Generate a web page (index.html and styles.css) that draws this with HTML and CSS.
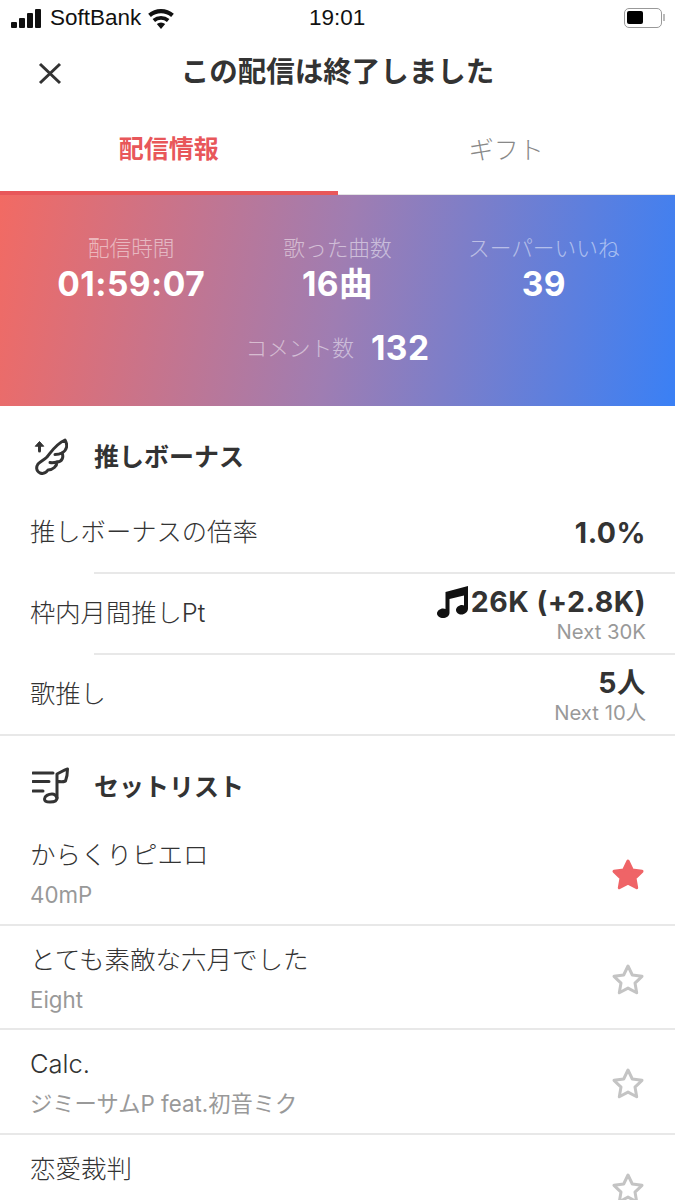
FILE: index.html
```html
<!DOCTYPE html>
<html lang="ja">
<head>
  <meta charset="UTF-8">
  <title>この配信は終了しました</title>
  <link rel="stylesheet" href="styles.css">
</head>
<body>
  <div class="container">
    <div class="status-bar">
      <div class="status-left">
        <svg class="signal" width="31" height="19" viewBox="0 0 31 19"><rect x="0" y="13" width="6" height="6" rx="1"/><rect x="8" y="9" width="6" height="10" rx="1"/><rect x="16" y="4" width="6" height="15" rx="1"/><rect x="24" y="0" width="6" height="19" rx="1"/></svg>
        <span class="carrier">SoftBank</span>
        <svg class="wifi" width="28" height="21" viewBox="0 0 24 18"><path d="M12 18l-3.600-4.200a5.400 5.400 0 0 1 7.200 0zM6.900 12l-2.100-2.500a11.200 11.200 0 0 1 14.400 0L17.100 12a8 8 0 0 0-10.200 0zM3.300 7.700L1 5a17 17 0 0 1 22 0l-2.300 2.700a13.600 13.600 0 0 0-17.400 0z"/></svg>
      </div>
      <div class="status-time">19:01</div>
      <div class="battery"><span class="battery-level"></span></div>
    </div>

    <header class="nav">
      <svg class="close" width="24" height="24" viewBox="0 0 24 24"><path d="M2 3l20 19M22 3L2 22"/></svg>
      <h1>この配信は終了しました</h1>
    </header>

    <div class="tabs">
      <div class="tab active">配信情報</div>
      <div class="tab">ギフト</div>
    </div>

    <section class="stats">
      <div class="stats-top">
        <div class="stat"><span class="stat-label">配信時間</span><strong>01:59:07</strong></div>
        <div class="stat"><span class="stat-label">歌った曲数</span><strong>16曲</strong></div>
        <div class="stat"><span class="stat-label">スーパーいいね</span><strong>39</strong></div>
      </div>
      <div class="stats-comment"><span class="stat-label">コメント数</span><strong>132</strong></div>
    </section>

    <section class="bonus">
      <div class="section-head">
        <svg class="section-icon" width="36" height="38" viewBox="0 0 36 38">
          <path d="M33 3C36 8 35 13 30 16 32 20 30 25 25 25 25 29 21 33 16 33 14 36 11 37 8 36 4 34 4 30 6 27 9 24 12 23 15 20 20 14 24 7 33 3z"/>
          <path d="M30 16c-2 1-4 1.500-7 1.500M25 25c-2 .5-4 1-7 .5"/>
          <path class="arrow" d="M3.500 9L7.500 4.500 11.500 9z"/>
          <path d="M7.500 8v6"/>
        </svg>
        <h2>推しボーナス</h2>
      </div>
      <div class="row">
        <span class="row-label">推しボーナスの倍率</span>
        <div class="row-value"><b>1.0%</b></div>
      </div>
      <div class="row">
        <span class="row-label">枠内月間推しPt</span>
        <div class="row-value">
          <b class="with-note"><svg class="note" width="33" height="32" viewBox="0 0 33 32"><path d="M9.500 6L32 0v22.500c0 3.500-3.500 6-6.500 6S20 26.500 20 24s3-5 6-5c1 0 1.500.2 2 .5V9.500L13.500 13v14c0 3-3.500 5-6.500 5S1 30 1 27.500 4 22.500 7 22.500c1 0 2 .2 2.500.5z"/></svg>26K (+2.8K)</b>
          <small>Next 30K</small>
        </div>
      </div>
      <div class="row">
        <span class="row-label">歌推し</span>
        <div class="row-value"><b>5人</b><small>Next 10人</small></div>
      </div>
    </section>

    <section class="setlist">
      <div class="section-head">
        <svg class="section-icon" width="37" height="38" viewBox="0 0 37 38">
          <path d="M1 7h20M1 15.500h16M1 25h10"/>
          <path d="M25 32V8C29 6 32 4 35.500 3 35.500 7 35 11 33.500 15 31 16 28 16 25 15"/>
          <path d="M25 32c0 2.500-3 4-7 4-3 0-5.500-1-5.500-3 0-3 4-5 7.500-5 2 0 4 1 5 4z"/>
        </svg>
        <h2>セットリスト</h2>
      </div>
      <div class="song">
        <div class="song-text"><p>からくりピエロ</p><small>40mP</small></div>
        <svg class="star on" width="34" height="34" viewBox="0 0 34 34"><path d="M17 3l4.300 9 9.700 1.300-7 6.800 1.700 9.700-8.700-4.700-8.700 4.700 1.700-9.700-7-6.800 9.700-1.300z"/></svg>
      </div>
      <div class="song">
        <div class="song-text"><p>とても素敵な六月でした</p><small>Eight</small></div>
        <svg class="star" width="34" height="34" viewBox="0 0 34 34"><path d="M17 3l4.300 9 9.700 1.300-7 6.800 1.700 9.700-8.700-4.700-8.700 4.700 1.700-9.700-7-6.800 9.700-1.300z"/></svg>
      </div>
      <div class="song">
        <div class="song-text"><p>Calc.</p><small>ジミーサムP feat.初音ミク</small></div>
        <svg class="star" width="34" height="34" viewBox="0 0 34 34"><path d="M17 3l4.300 9 9.700 1.300-7 6.800 1.700 9.700-8.700-4.700-8.700 4.700 1.700-9.700-7-6.800 9.700-1.300z"/></svg>
      </div>
      <div class="song">
        <div class="song-text"><p>恋愛裁判</p><small>40mP</small></div>
        <svg class="star" width="34" height="34" viewBox="0 0 34 34"><path d="M17 3l4.300 9 9.700 1.300-7 6.800 1.700 9.700-8.700-4.700-8.700 4.700 1.700-9.700-7-6.800 9.700-1.300z"/></svg>
      </div>
    </section>
  </div>
</body>
</html>
```

FILE: styles.css
```css
* {
  margin: 0;
  padding: 0;
  box-sizing: border-box;
}

html, body {
  height: 1200px;
  overflow: hidden;
}

body {
  font-family: Inter, "Noto Sans CJK JP", sans-serif;
  background-color: #fff;
  color: #333;
}

.container {
  width: 675px;
  height: 1200px;
  overflow: hidden;
}

/* status bar */
.status-bar {
  height: 36px;
  padding: 0 10px 0 11px;
  display: flex;
  align-items: center;
  justify-content: space-between;
  position: relative;
  color: #111;
}

.status-left {
  display: flex;
  align-items: center;
  gap: 8px;
}

.signal, .wifi {
  fill: #111;
}

.wifi {
  margin-left: -2px;
}

.carrier {
  font-family: "Liberation Sans", sans-serif;
  font-size: 22.500px;
}

.status-time {
  font-family: "Liberation Sans", sans-serif;
  font-size: 22.500px;
  position: absolute;
  left: 309px;
  top: 5px;
}

.battery {
  width: 38px;
  height: 20px;
  border: 1.500px solid #999;
  border-radius: 5px;
  padding: 2px;
  margin-right: 3px;
  position: relative;
}

.battery::after {
  content: "";
  position: absolute;
  right: -4px;
  top: 5px;
  width: 2px;
  height: 7px;
  background-color: #bbb;
}

.battery-level {
  display: block;
  width: 16px;
  height: 13px;
  background-color: #000;
  border-radius: 2px;
}

/* nav */
.nav {
  height: 72px;
  position: relative;
  display: flex;
  align-items: center;
  justify-content: center;
}

.close {
  position: absolute;
  left: 38px;
  top: 25px;
  fill: none;
  stroke: #333;
  stroke-width: 3;
}

.nav h1 {
  font-size: 28.500px;
  font-weight: 700;
  color: #333;
  line-height: 1;
}

/* tabs */
.tabs {
  height: 87px;
  display: flex;
}

.tab {
  flex: 1;
  display: flex;
  align-items: center;
  justify-content: center;
  font-size: 25px;
  color: #888;
  font-weight: 300;
  padding-bottom: 6px;
  border-bottom: 1px solid #e4e4e4;
}

.tab.active {
  color: #e8575a;
  font-weight: 700;
  border-bottom: 4px solid #e8575a;
}

/* gradient block */
.stats {
  height: 211px;
  background: linear-gradient(100deg, #f26a63 0%, #9f7db2 50%, #3a80f5 100%);
  color: #fff;
  padding-top: 39px;
}

.stats-top {
  display: flex;
  padding: 0 28px;
}

.stat {
  flex: 1;
  display: flex;
  flex-direction: column;
  align-items: center;
}

.stat-label {
  font-size: 21.700px;
  line-height: 28px;
  color: rgba(255, 255, 255, 0.5);
  font-weight: 300;
}

.stat strong, .stats-comment strong {
  font-size: 33.500px;
  line-height: 44px;
  font-weight: 700;
  letter-spacing: 0.5px;
}

.stats-comment {
  margin-top: 20px;
  display: flex;
  justify-content: center;
  align-items: center;
  gap: 17px;
}

/* sections */
.section-head {
  height: 85px;
  padding: 12px 30px 0 32px;
  display: flex;
  align-items: center;
}

.section-icon {
  fill: none;
  stroke: #333;
  stroke-width: 3;
  stroke-linecap: round;
  stroke-linejoin: round;
  margin-right: 26px;
  flex: none;
}

.section-icon .arrow {
  fill: #333;
  stroke-width: 1;
}

.bonus .section-icon {
  margin-top: 3px;
}

.setlist .section-icon {
  margin-right: 25px;
}

.section-head h2 {
  font-size: 25px;
  font-weight: 700;
  color: #333;
}

.bonus {
  border-bottom: 2px solid #e8e8e8;
}

.row {
  height: 81px;
  padding: 0 29px 0 30px;
  display: flex;
  align-items: center;
  justify-content: space-between;
  position: relative;
}

.row + .row::before {
  content: "";
  position: absolute;
  left: 94px;
  right: 0;
  top: 0;
  height: 2px;
  background-color: #e8e8e8;
}

.row-label {
  font-size: 25.300px;
  color: #333;
  font-weight: 300;
  padding-bottom: 4px;
}

.row-value {
  display: flex;
  flex-direction: column;
  align-items: flex-end;
  padding-top: 2px;
}

.row-value b {
  font-size: 28.500px;
  line-height: 36px;
  font-weight: 700;
  color: #333;
  letter-spacing: 0.5px;
}

.with-note {
  display: flex;
  align-items: center;
}

.note {
  fill: #111;
  margin-right: 2px;
}

.row-value small {
  font-size: 20.300px;
  line-height: 24px;
  color: #999;
}

.song {
  height: 104.500px;
  padding: 6px 30px 0;
  display: flex;
  align-items: center;
  justify-content: space-between;
  border-bottom: 2px solid #e8e8e8;
}

.song-text {
  padding-bottom: 3px;
}

.song-text p {
  font-size: 25.500px;
  line-height: 36px;
  color: #333;
  font-weight: 300;
}

.song-text small {
  display: block;
  margin-top: 7px;
  font-size: 22.300px;
  line-height: 30px;
  color: #999;
}

.star {
  fill: none;
  stroke: #c4c4c4;
  stroke-width: 3;
  stroke-linejoin: round;
}

.star.on {
  fill: #ef6467;
  stroke: #ef6467;
}
```
